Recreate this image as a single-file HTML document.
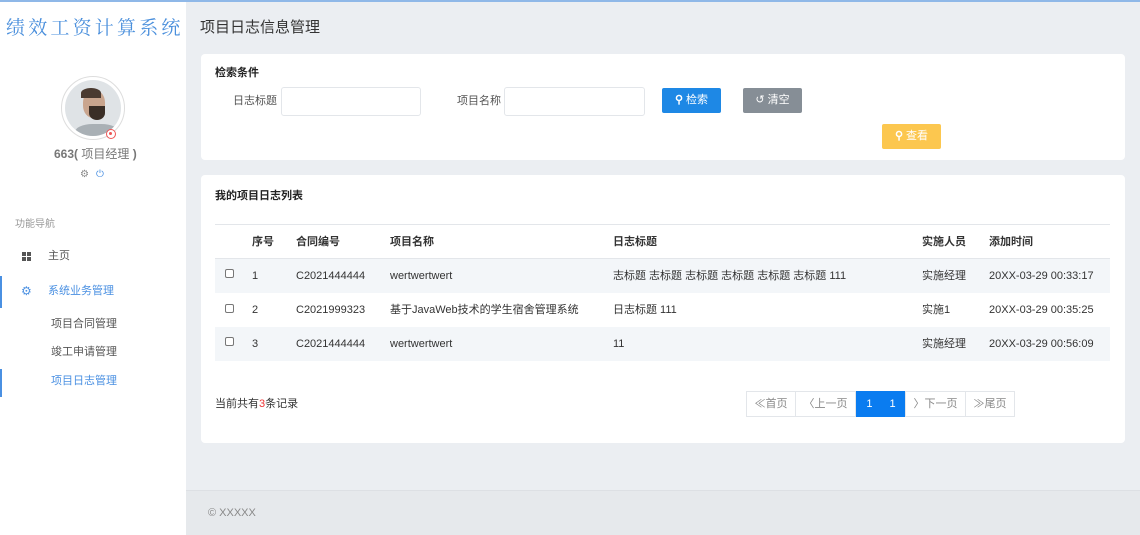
<!DOCTYPE html>
<html><head><meta charset="utf-8"><style>
*{box-sizing:border-box;margin:0;padding:0}
body{width:1140px;height:535px;overflow:hidden;background:#ebeef2;font-family:"Liberation Sans","Noto Sans CJK SC",sans-serif;font-size:11px;color:#333;position:relative}
.topline{position:absolute;left:0;top:0;width:1140px;height:2px;background:#8fb8e8}
.side{position:absolute;left:0;top:2px;width:186px;height:533px;background:#fff}
.abs{position:absolute;white-space:nowrap;line-height:14px}
.card{position:absolute;background:#fff;border-radius:4px}
.inp{position:absolute;border:1px solid #e3e6ea;border-radius:3px;background:#fff;height:29px}
.btn{position:absolute;color:#fff;font-size:11px;text-align:center;line-height:25px;height:25px;border-radius:2px}
.row{position:absolute;left:215px;width:895px;height:34px}
.cb{position:absolute;width:9px;height:9px;border:1px solid #777;border-radius:2px;background:#fff}
.pg{position:absolute;top:391px;height:26px;line-height:24px;border:1px solid #e3e6ea;color:#888;text-align:center;font-size:11px;background:#fff}
</style></head><body>
<div class="topline"></div>
<div class="side">
<div class="abs" style="left:6px;top:13px;font-family:'Noto Serif CJK SC',serif;font-size:19px;line-height:24px;color:#4a8fdc;letter-spacing:3.2px">绩效工资计算系统</div>
<div class="abs" style="left:61px;top:74px;width:64px;height:64px;border-radius:50%;border:1px solid #ddd;background:#fff"></div>
<div class="abs" style="left:65px;top:78px;width:56px;height:56px;border-radius:50%;background:#dfe3e6;overflow:hidden">
<div style="position:absolute;left:18px;top:10px;width:22px;height:28px;border-radius:45%;background:#c9a58e"></div>
<div style="position:absolute;left:16px;top:8px;width:20px;height:10px;border-radius:50% 50% 0 0;background:#4a3a30"></div>
<div style="position:absolute;left:24px;top:26px;width:16px;height:14px;border-radius:0 0 50% 50%;background:#3a2e26"></div>
<div style="position:absolute;left:10px;top:44px;width:44px;height:20px;border-radius:40% 40% 0 0;background:#a9b0b5"></div></div>
<div class="abs" style="left:106px;top:127px;width:10px;height:10px;border-radius:50%;border:1.5px solid #e55;background:#fff"><div style="margin:2px;width:3px;height:3px;border-radius:50%;background:#e55"></div></div>
<div class="abs" style="left:54px;top:145px;font-size:12px;color:#777;font-weight:bold">663( <span style="font-weight:normal">项目经理</span> )</div>
<div class="abs" style="left:80px;top:166px;font-size:10px;color:#888">⚙</div>
<div class="abs" style="left:96px;top:166px;font-size:10px;color:#4a90e2">⏻</div>
<div class="abs" style="left:15px;top:216px;font-size:10px;color:#999">功能导航</div>
<div class="abs" style="left:22px;top:250px;width:9px;height:9px;background:linear-gradient(#fff,#fff) 4px 0/1px 9px no-repeat,linear-gradient(#fff,#fff) 0 4px/9px 1px no-repeat,#555"></div>
<div class="abs" style="left:48px;top:247px;color:#555">主页</div>
<div class="abs" style="left:0;top:274px;width:2px;height:32px;background:#4a90e2"></div>
<div class="abs" style="left:21px;top:282px;color:#4a90e2;font-size:12px">⚙</div>
<div class="abs" style="left:48px;top:282px;color:#4a90e2">系统业务管理</div>
<div class="abs" style="left:51px;top:315px;color:#555">项目合同管理</div>
<div class="abs" style="left:51px;top:343px;color:#555">竣工申请管理</div>
<div class="abs" style="left:0;top:367px;width:2px;height:28px;background:#4a90e2"></div>
<div class="abs" style="left:51px;top:372px;color:#4a90e2">项目日志管理</div>
</div>
<div class="abs" style="left:200px;top:18px;font-size:15px;line-height:20px;color:#333">项目日志信息管理</div>
<div class="card" style="left:201px;top:54px;width:924px;height:106px"></div>
<div class="abs" style="left:215px;top:66px;font-weight:bold;color:#222">检索条件</div>
<div class="abs" style="left:233px;top:94px;color:#555">日志标题</div>
<div class="inp" style="left:281px;top:87px;width:140px"></div>
<div class="abs" style="left:457px;top:94px;color:#555">项目名称</div>
<div class="inp" style="left:504px;top:87px;width:141px"></div>
<div class="btn" style="left:662px;top:88px;width:59px;background:#1e88e5"><b>⚲</b> 检索</div>
<div class="btn" style="left:743px;top:88px;width:59px;background:#868e96">↺ 清空</div>
<div class="btn" style="left:882px;top:124px;width:59px;background:#fcc74f"><b>⚲</b> 查看</div>
<div class="card" style="left:201px;top:175px;width:924px;height:268px"></div>
<div class="abs" style="left:215px;top:189px;font-weight:bold;color:#222">我的项目日志列表</div>
<div class="abs" style="left:215px;top:224px;width:895px;height:1px;background:#e3e6ea"></div>
<div class="row" style="top:225px;border-bottom:1px solid #e3e6ea;font-weight:bold;color:#333">
<span class="abs" style="left:37px;top:10px">序号</span><span class="abs" style="left:81px;top:10px">合同编号</span><span class="abs" style="left:175px;top:10px">项目名称</span><span class="abs" style="left:398px;top:10px">日志标题</span><span class="abs" style="left:707px;top:10px">实施人员</span><span class="abs" style="left:774px;top:10px">添加时间</span></div>
<div class="row" style="top:259px;background:#f3f6f9"><div class="cb" style="left:10px;top:10px"></div><span class="abs" style="left:37px;top:10px">1</span><span class="abs" style="left:81px;top:10px">C2021444444</span><span class="abs" style="left:175px;top:10px">wertwertwert</span><span class="abs" style="left:398px;top:10px">志标题 志标题 志标题 志标题 志标题 志标题 111</span><span class="abs" style="left:707px;top:10px">实施经理</span><span class="abs" style="left:774px;top:10px">20XX-03-29 00:33:17</span></div>
<div class="row" style="top:293px"><div class="cb" style="left:10px;top:11px"></div><span class="abs" style="left:37px;top:10px">2</span><span class="abs" style="left:81px;top:10px">C2021999323</span><span class="abs" style="left:175px;top:10px">基于JavaWeb技术的学生宿舍管理系统</span><span class="abs" style="left:398px;top:10px">日志标题 111</span><span class="abs" style="left:707px;top:10px">实施1</span><span class="abs" style="left:774px;top:10px">20XX-03-29 00:35:25</span></div>
<div class="row" style="top:327px;background:#f3f6f9"><div class="cb" style="left:10px;top:10px"></div><span class="abs" style="left:37px;top:10px">3</span><span class="abs" style="left:81px;top:10px">C2021444444</span><span class="abs" style="left:175px;top:10px">wertwertwert</span><span class="abs" style="left:398px;top:10px">11</span><span class="abs" style="left:707px;top:10px">实施经理</span><span class="abs" style="left:774px;top:10px">20XX-03-29 00:56:09</span></div>
<div class="abs" style="left:215px;top:397px;color:#333">当前共有<span style="color:#e33">3</span>条记录</div>
<div class="pg" style="left:746px;width:50px">≪首页</div>
<div class="pg" style="left:795px;width:61px">〈上一页</div>
<div class="pg" style="left:856px;width:50px;background:#0a7cf0;border-color:#0a7cf0;color:#fff;word-spacing:14px">1 1</div>
<div class="pg" style="left:905px;width:61px">〉下一页</div>
<div class="pg" style="left:965px;width:50px">≫尾页</div>
<div class="abs" style="left:186px;top:490px;width:954px;height:45px;background:#e6e9ec;border-top:1px solid #dde0e4"></div>
<div class="abs" style="left:208px;top:506px;color:#888">© XXXXX</div>
</body></html>
